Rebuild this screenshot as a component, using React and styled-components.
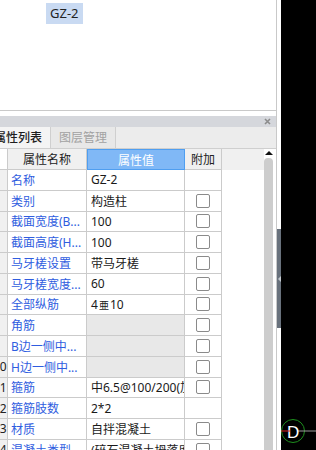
import React from "react";
import styled, { createGlobalStyle } from "styled-components";

const GlobalStyle = createGlobalStyle`
  * {
    box-sizing: border-box;
  }
  html, body {
    margin: 0;
    padding: 0;
    background: #fff;
    overflow: hidden;
  }
  body {
    font-family: "Noto Sans", "Noto Sans CJK SC", sans-serif;
    font-size: 12px;
    color: #1a1a1a;
  }
`;

const Screen = styled.div`
  display: flex;
  width: 316px;
  height: 450px;
  overflow: hidden;
`;

const Workspace = styled.div`
  display: flex;
  flex: none;
  width: 281px;
  background: #fff;
`;

const Dock = styled.div`
  display: flex;
  flex-direction: column;
  width: 277px;
  border-right: 1px solid #c9c9c9;
  overflow: hidden;
`;

const Preview = styled.div`
  flex: none;
  height: 111px;
  padding: 3px 0 0 46px;
  border-bottom: 1px solid #c9c9c9;
`;

const Tag = styled.span`
  display: inline-block;
  height: 21px;
  line-height: 21px;
  padding: 0 4px;
  background: #c9daf2;
  font-size: 13px;
  color: #222;
`;

const Spacer = styled.div`
  flex: none;
  height: 5px;
`;

const TitleBar = styled.div`
  flex: none;
  height: 11px;
  display: flex;
  align-items: center;
  justify-content: flex-end;
  padding-right: 5px;
  background: #d5d7dc;
`;

const PanelFrame = styled.div`
  flex: 1;
  min-height: 0;
  display: flex;
  flex-direction: column;
  margin-left: -20px;
`;

const TabStrip = styled.div`
  flex: none;
  height: 22px;
  display: flex;
  padding-left: 6px;
  background: #ececec;
  border-bottom: 1px solid #cfcfcf;
`;

const Tab = styled.div`
  padding: 0 8px;
  line-height: 21px;
  border-right: 1px solid #cfcfcf;
  background: ${(props) => (props.active ? "#f4f4f4" : "#e8e8e8")};
  color: ${(props) => (props.active ? "#1e1e1e" : "#a2a2a2")};
  font-weight: ${(props) => (props.active ? 500 : 400)};
`;

const Body = styled.div`
  flex: 1;
  min-height: 0;
  display: flex;
`;

const TableArea = styled.div`
  flex: 1;
  display: flex;
  flex-direction: column;
`;

const Row = styled.div`
  flex: none;
  display: grid;
  grid-template-columns: 28px 79px 98px 37px 1fr;
  height: ${(props) => (props.head ? "21px" : "20.75px")};
`;

const Cell = styled.div`
  display: flex;
  align-items: center;
  overflow: hidden;
  white-space: nowrap;
  border-right: 1px solid #cbcbcb;
  border-bottom: 1px solid #cbcbcb;
`;

const HeadCell = styled(Cell)`
  justify-content: center;
  background: ${(props) => (props.blank ? "#fff" : "#f0f0f0")};
  color: #222;
`;

const ValueHead = styled(Cell)`
  justify-content: center;
  background: #80b8f6;
  border: 1px solid #4f9ef0;
  color: #fff;
`;

const HeadFiller = styled.div`
  background: #f0f0f0;
`;

const RowNum = styled(Cell)`
  padding-left: 13px;
  background: #f0f0f0;
  color: #222;
`;

const NameCell = styled(Cell)`
  padding-left: 3px;
  color: #2f5de0;
`;

const ValueCell = styled(Cell)`
  padding-left: 4px;
  background: ${(props) => (props.muted ? "#e8e8e8" : "#fff")};
  color: #1a1a1a;
`;

const Grade = styled.span`
  font-size: 10px;
  margin: 0 1px;
`;

const CheckCell = styled(Cell)`
  justify-content: center;
`;

const Checkbox = styled.span`
  width: 14px;
  height: 14px;
  border: 1px solid #8a8a8a;
  border-radius: 2px;
  background: #fff;
`;

const Scroll = styled.div`
  flex: none;
  width: 9px;
  margin-right: 3px;
  display: flex;
  flex-direction: column;
  align-items: center;
  padding-top: 2px;
`;

const ScrollArrow = styled.div`
  width: 0;
  height: 0;
  border-left: 4px solid transparent;
  border-right: 4px solid transparent;
  border-bottom: 4px solid #111;
`;

const ScrollThumb = styled.div`
  flex: 1;
  width: 9px;
  margin-top: 3px;
  background: #cdcdcd;
  border-radius: 4px 4px 0 0;
`;

const Sash = styled.div`
  flex: none;
  width: 4px;
  display: flex;
  flex-direction: column;
`;

const SashHandle = styled.div`
  margin-top: 229px;
  height: 99px;
  background: #69727d;
  display: flex;
  align-items: center;
  justify-content: center;
`;

const SashArrow = styled.span`
  width: 0;
  height: 0;
  border-top: 3px solid transparent;
  border-bottom: 3px solid transparent;
  border-right: 3px solid #c3c9cf;
`;

const Canvas = styled.div`
  flex: 1;
  position: relative;
  background: #000;
`;

const Marker = styled.svg`
  position: absolute;
  left: 0;
  top: 419px;
`;

const rows = [
  { name: "名称", value: "GZ-2" },
  { name: "类别", value: "构造柱", check: true },
  { name: "截面宽度(B...", value: "100", check: true },
  { name: "截面高度(H...", value: "100", check: true },
  { name: "马牙槎设置", value: "带马牙槎", check: true },
  { name: "马牙槎宽度...", value: "60", check: true },
  { name: "全部纵筋", value: "grade", check: true },
  { name: "角筋", value: "", muted: true, check: true },
  { name: "B边一侧中...", value: "", muted: true, check: true },
  { name: "H边一侧中...", value: "", muted: true, check: true },
  { name: "箍筋", value: "中6.5@100/200(加密区)", check: true },
  { name: "箍筋肢数", value: "2*2" },
  { name: "材质", value: "自拌混凝土", check: true },
  { name: "混凝土类型", value: "(碎石混凝土坍落度...", check: true },
];

const CloseIcon = () => (
  <svg width="7" height="7" viewBox="0 0 7 7">
    <path d="M1 1L6 6M6 1L1 6" stroke="#8c8c8c" strokeWidth="1.6" />
  </svg>
);

export default function App() {
  return (
    <Screen>
      <GlobalStyle />
      <Workspace>
        <Dock>
          <Preview>
            <Tag>GZ-2</Tag>
          </Preview>
          <Spacer />
          <TitleBar>
            <CloseIcon />
          </TitleBar>
          <PanelFrame>
            <TabStrip>
              <Tab active>属性列表</Tab>
              <Tab>图层管理</Tab>
            </TabStrip>
            <Body>
              <TableArea>
                <Row head>
                  <HeadCell blank />
                  <HeadCell>属性名称</HeadCell>
                  <ValueHead>属性值</ValueHead>
                  <HeadCell>附加</HeadCell>
                  <HeadFiller />
                </Row>
                {rows.map((row, i) => (
                  <Row key={row.name}>
                    <RowNum>{i + 1}</RowNum>
                    <NameCell>{row.name}</NameCell>
                    <ValueCell muted={row.muted}>
                      {row.value === "grade" ? (
                        <>
                          4<Grade>亜</Grade>10
                        </>
                      ) : (
                        row.value
                      )}
                    </ValueCell>
                    <CheckCell>{row.check && <Checkbox />}</CheckCell>
                    <div />
                  </Row>
                ))}
              </TableArea>
              <Scroll>
                <ScrollArrow />
                <ScrollThumb />
              </Scroll>
            </Body>
          </PanelFrame>
        </Dock>
        <Sash>
          <SashHandle>
            <SashArrow />
          </SashHandle>
        </Sash>
      </Workspace>
      <Canvas>
        <Marker width="35" height="26" viewBox="0 0 35 26">
          <circle cx="12" cy="12" r="11.5" fill="none" stroke="#1e8f1e" strokeWidth="1" />
          <line x1="16" y1="12" x2="35" y2="12" stroke="#9a9a9a" strokeWidth="1" />
          <text x="6" y="18.5" fill="#fff" fontSize="17" fontFamily="Liberation Sans, sans-serif">
            D
          </text>
          <line x1="0" y1="12" x2="9" y2="12" stroke="#e02020" strokeWidth="1" />
        </Marker>
      </Canvas>
    </Screen>
  );
}
